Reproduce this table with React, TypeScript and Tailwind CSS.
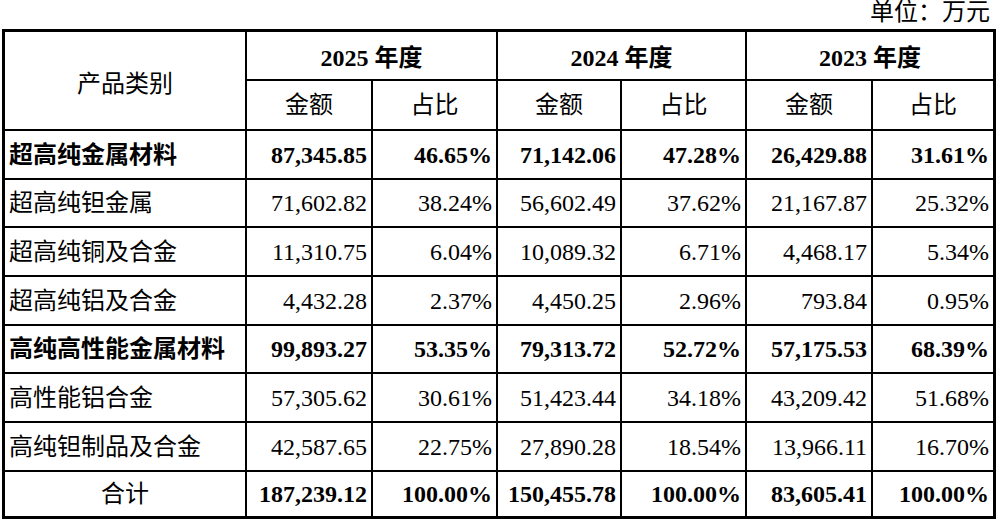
import React from "react";

interface Row {
  name: string;
  bold?: boolean;
  center?: boolean;
  values: string[];
}

const rows: Row[] = [
  { name: "超高纯金属材料", bold: true, values: ["87,345.85", "46.65%", "71,142.06", "47.28%", "26,429.88", "31.61%"] },
  { name: "超高纯钽金属", values: ["71,602.82", "38.24%", "56,602.49", "37.62%", "21,167.87", "25.32%"] },
  { name: "超高纯铜及合金", values: ["11,310.75", "6.04%", "10,089.32", "6.71%", "4,468.17", "5.34%"] },
  { name: "超高纯铝及合金", values: ["4,432.28", "2.37%", "4,450.25", "2.96%", "793.84", "0.95%"] },
  { name: "高纯高性能金属材料", bold: true, values: ["99,893.27", "53.35%", "79,313.72", "52.72%", "57,175.53", "68.39%"] },
  { name: "高性能铝合金", values: ["57,305.62", "30.61%", "51,423.44", "34.18%", "43,209.42", "51.68%"] },
  { name: "高纯钽制品及合金", values: ["42,587.65", "22.75%", "27,890.28", "18.54%", "13,966.11", "16.70%"] },
  { name: "合计", center: true, values: ["187,239.12", "100.00%", "150,455.78", "100.00%", "83,605.41", "100.00%"] },
];

const years = ["2025", "2024", "2023"];

function Cell({ children, className = "" }: { children: React.ReactNode; className?: string }) {
  return <div className={`bg-white flex items-center ${className}`}>{children}</div>;
}

export default function App() {
  return (
    <div
      className="w-[1000px] h-[523px] bg-white text-black text-[24px] overflow-hidden"
      style={{ fontFamily: '"Liberation Serif", "Noto Sans CJK SC", serif' }}
    >
      <div className="h-[29px] flex items-start justify-end pr-[10px] leading-[24px] pt-0">
        单位：万元
      </div>
      <div className="ml-[2px] w-fit grid grid-cols-[240px_124px_123px_122px_123px_124px_120px] grid-rows-[47px_48px_47px_46px_47px_47px_46px_47px_47px_44px] gap-[2px] bg-black border-[3px] border-black">
        <Cell className="row-span-2 justify-center pt-[6px]">产品类别</Cell>
        {years.map((y) => (
          <Cell key={y} className="col-span-2 justify-center font-bold pt-[4px]">
            {y} 年度
          </Cell>
        ))}
        {years.map((y) => (
          <React.Fragment key={`sub-${y}`}>
            <Cell className="justify-center">金额</Cell>
            <Cell className="justify-center">占比</Cell>
          </React.Fragment>
        ))}
        {rows.map((r) => (
          <React.Fragment key={r.name}>
            <Cell className={`${r.center ? "justify-center" : "pl-[4px]"} ${r.bold ? "font-bold" : ""}`}>
              {r.name}
            </Cell>
            {r.values.map((v, i) => (
              <Cell
                key={i}
                className={`justify-end pr-[4px] ${r.bold || r.center ? "font-bold" : ""}`}
              >
                {v}
              </Cell>
            ))}
          </React.Fragment>
        ))}
      </div>
    </div>
  );
}
